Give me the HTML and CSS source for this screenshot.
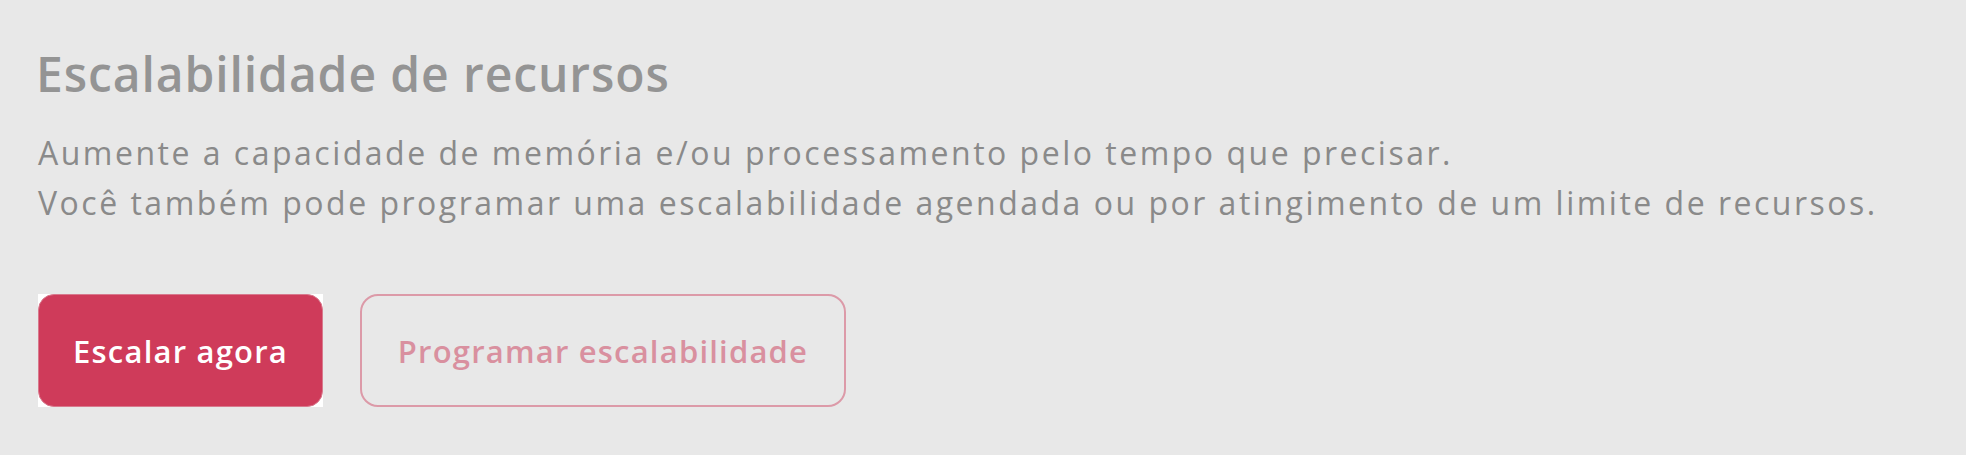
FILE: index.html
```html
<!DOCTYPE html>
<html lang="pt-BR">
  <head>
    <meta charset="UTF-8" />
    <meta name="viewport" content="width=device-width, initial-scale=1.0" />
    <title>Escalabilidade de recursos</title>
    <link rel="stylesheet" href="styles.css">
  </head>
  <body>
    <div class="scaling">
      <h2>Escalabilidade de recursos</h2>
      <p class="description">
        Aumente a capacidade de memória e/ou processamento pelo tempo que precisar.<br />
        Você também pode programar uma escalabilidade agendada ou por atingimento de um limite de recursos.
      </p>
      <div class="actions">
        <div class="primary-wrap">
          <button class="btn btn-primary">Escalar agora</button>
        </div>
        <button class="btn btn-outline">Programar escalabilidade</button>
      </div>
    </div>
  </body>
</html>
```

FILE: styles.css
```css
body {
  font-family: "Open Sans", Arial, sans-serif;
  background-color: #e8e8e8;
  margin: 0;
  padding: 0;
}
.scaling {
  padding: 42px 36px 0 36px;
}
.scaling h2 {
  margin: 0;
  font-size: 48px;
  font-weight: 600;
  letter-spacing: 0.9px;
  color: #949494;
  line-height: 64px;
}
.description {
  margin: 22px 0 0 2px;
  font-size: 32px;
  letter-spacing: 2.5px;
  line-height: 50px;
  color: #8a8a8a;
}
.actions {
  display: flex;
  gap: 37px;
  margin-top: 66px;
  margin-left: 2px;
}
.primary-wrap {
  background-color: #fff;
}
.btn {
  font-family: "Open Sans", Arial, sans-serif;
  font-size: 31px;
  font-weight: 600;
  letter-spacing: 1.2px;
  height: 113px;
  box-sizing: border-box;
  cursor: pointer;
}
.btn-primary {
  width: 285px;
  background-color: #cf3b5a;
  color: #fff;
  border: 1px solid #d8798d;
  border-radius: 16px;
}
.btn-outline {
  width: 486px;
  background-color: transparent;
  color: #d9909f;
  border: 2px solid #dc9aa8;
  border-radius: 18px;
}
```
